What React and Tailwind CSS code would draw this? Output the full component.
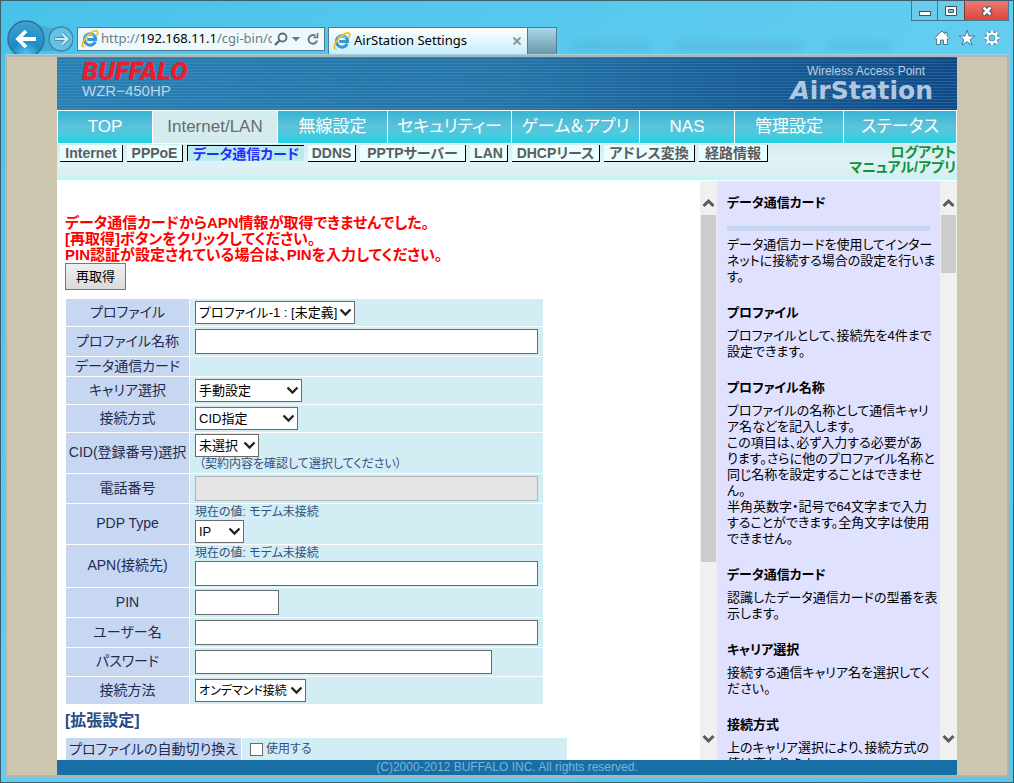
import React from "react";

const NAV = [
  "TOP",
  "Internet/LAN",
  "無線設定",
  "セキュリティー",
  "ゲーム＆アプリ",
  "NAS",
  "管理設定",
  "ステータス",
];

const SUBNAV = [
  { text: "Internet", width: "w-[63px]" },
  { text: "PPPoE", width: "w-[56px]" },
  { text: "データ通信カード", width: "w-[117px]", active: true },
  { text: "DDNS", width: "w-[48px]" },
  { text: "PPTPサーバー", width: "w-[106px]" },
  { text: "LAN", width: "w-[38px]" },
  { text: "DHCPリース", width: "w-[88px]" },
  { text: "アドレス変換", width: "w-[91px]" },
  { text: "経路情報", width: "w-[69px]" },
];

const HELP = [
  { title: "プロファイル", lines: ["プロファイルとして、接続先を4件まで", "設定できます。"] },
  {
    title: "プロファイル名称",
    lines: [
      "プロファイルの名称として通信キャリ",
      "ア名などを記入します。",
      "この項目は、必ず入力する必要があ",
      "ります。さらに他のプロファイル名称と",
      "同じ名称を設定することはできませ",
      "ん。",
      "半角英数字・記号で64文字まで入力",
      "することができます。全角文字は使用",
      "できません。",
    ],
  },
  { title: "データ通信カード", lines: ["認識したデータ通信カードの型番を表", "示します。"] },
  { title: "キャリア選択", lines: ["接続する通信キャリア名を選択してく", "ださい。"] },
  { title: "接続方式", lines: ["上のキャリア選択により、接続方式の", "値は変わります。"] },
];

function IeLogo() {
  return (
    <svg viewBox="0 0 18 18" className="h-[18px] w-[18px] shrink-0" aria-hidden="true">
      <path
        d="M14.2 11.6A5.6 5.6 0 1 1 14.6 9.4H6.2"
        fill="none"
        stroke="#3a95d6"
        strokeWidth="3"
      />
      <path d="M4.6 6.6A5.2 5.2 0 0 1 13 6" fill="none" stroke="#8accf0" strokeWidth="1.200" />
      <path
        d="M3.4 16.4C.2 17 .6 13 4 8.600C8 3.400 14.500-.6 16.300 1.500C17.200 2.600 16.500 4.400 15.600 5.800"
        fill="none"
        stroke="#f3bd22"
        strokeWidth="1.800"
      />
    </svg>
  );
}

function BackForward() {
  return (
    <svg viewBox="4 0 68 53" className="h-[53px] w-[68px] shrink-0" aria-hidden="true">
      <defs>
        <radialGradient id="back" cx="50%" cy="95%" r="90%">
          <stop offset="0" stopColor="#5cc4ec" />
          <stop offset=".45" stopColor="#1d8ac6" />
          <stop offset="1" stopColor="#3c9fd0" />
        </radialGradient>
      </defs>
      <path d="M34 22C44 27 50 28 60 26V50H38Z" fill="#3da5cb" opacity=".7" />
      <circle cx="25" cy="38" r="18" fill="url(#back)" stroke="#31708f" strokeWidth="1.500" />
      <circle cx="60" cy="38" r="12" fill="#64c3e4" stroke="#3b86a3" strokeWidth="1.500" />
      <path d="M35 38H17.500M25 30L17 38L25 46" fill="none" stroke="#fff" strokeWidth="3.800" />
      <path d="M53.500 38H66M61 32.500L66.500 38L61 43.500" fill="none" stroke="#4792b0" strokeWidth="4" />
      <path d="M54 38H66M61 32.500L66.500 38L61 43.500" fill="none" stroke="#c4ebf7" strokeWidth="2.200" />
    </svg>
  );
}

function HomeIcon() {
  return (
    <svg viewBox="0 0 18 18" className="h-[18px] w-[18px]" aria-hidden="true">
      <path
        d="M9 2L1.500 9.200L2.600 10.400L3.600 9.600V15.500H7.500V11H10.500V15.500H14.400V9.600L15.400 10.400L16.500 9.200L14 6.800V3.200H12V5Z"
        fill="#fff"
        stroke="#3a6f86"
        strokeWidth=".9"
      />
    </svg>
  );
}

function StarIcon() {
  return (
    <svg viewBox="0 0 18 18" className="h-[18px] w-[18px]" aria-hidden="true">
      <path
        d="M9 1.300L11 7H16.800L12.200 10.500L13.900 16L9 12.700L4.100 16L5.800 10.500L1.200 7H7Z"
        fill="#fff"
        stroke="#3a6f86"
        strokeWidth=".9"
      />
    </svg>
  );
}

function GearIcon() {
  const teeth = "M9 1.500V4M9 14V16.500M1.500 9H4M14 9H16.500M3.700 3.700L5.500 5.500M12.500 12.500L14.300 14.300M14.300 3.700L12.500 5.500M5.500 12.500L3.700 14.300";
  return (
    <svg viewBox="0 0 18 18" className="h-[18px] w-[18px]" fill="none" aria-hidden="true">
      <g stroke="#3a6f86">
        <path d={teeth} strokeWidth="4" />
        <circle cx="9" cy="9" r="4.500" strokeWidth="3.600" />
      </g>
      <g stroke="#fff">
        <path d={teeth} strokeWidth="2.600" />
        <circle cx="9" cy="9" r="4.500" strokeWidth="2.400" />
      </g>
    </svg>
  );
}

function BrowserChrome() {
  return (
    <header className="relative flex h-[53px] shrink-0 justify-between overflow-hidden font-['Noto_Sans','Noto_Sans_CJK_JP',sans-serif]">
      <div aria-hidden="true" className="absolute inset-y-0 right-0 left-1/2 flex items-end gap-6 opacity-25 blur-xs">
        <span className="mb-1 ml-16 h-2 w-20 bg-[#3b93b0]" />
        <span className="mb-1 h-2 w-32 bg-[#4b8ba5]" />
        <span className="mb-1 h-2 w-16 bg-[#3b93b0]" />
      </div>
      <div className="relative flex min-w-0 items-end">
        <BackForward />
        <div className="mb-[3px] ml-1 flex h-[24px] w-[248px] items-center border border-[#4c7d90] bg-[#edf9fd] px-[3px]">
          <IeLogo />
          <p className="mr-[2px] ml-[2px] w-[171px] overflow-hidden text-[13px] whitespace-nowrap text-[#6e7c83]">
            http://<span className="text-black">192.168.11.1</span>/cgi-bin/c
          </p>
          <button type="button" aria-label="検索">
            <svg viewBox="0 0 14 14" className="h-[14px] w-[14px]" fill="none" stroke="#5d6a70" strokeWidth="1.800">
              <circle cx="8.500" cy="5.500" r="4" />
              <path d="M5.500 8.500L1 13" strokeWidth="2.400" />
            </svg>
          </button>
          <button type="button" aria-label="履歴" className="ml-[4px]">
            <svg viewBox="0 0 8 5" className="h-[5px] w-[8px]" fill="#6d7a80">
              <path d="M0 0H8L4 4.500Z" />
            </svg>
          </button>
          <button type="button" aria-label="更新" className="ml-[6px]">
            <svg viewBox="0 0 14 14" className="h-[14px] w-[14px]" fill="none" stroke="#6d7a80" strokeWidth="2">
              <path d="M11 8.500A4.300 4.300 0 1 1 9.500 4" />
              <path d="M7.500 5.500H11.500V1" strokeWidth="1.600" />
            </svg>
          </button>
        </div>
        <div className="ml-[3px] flex h-[27px] w-[200px] items-center border border-b-0 border-[#4c7d90] bg-linear-to-b from-white to-[#c3eefb] px-1">
          <IeLogo />
          <span className="ml-[3px] flex-1 truncate text-[13px] text-black">AirStation Settings</span>
          <button type="button" aria-label="タブを閉じる">
            <svg viewBox="0 0 8 8" className="mr-[2px] h-[8px] w-[8px]" stroke="#8b979c" strokeWidth="2">
              <path d="M.5 .5L7.500 7.500M7.500 .5L.5 7.500" />
            </svg>
          </button>
        </div>
        <button
          type="button"
          aria-label="新しいタブ"
          className="h-[27px] w-[29px] border border-b-0 border-l-0 border-[#4c7d90] bg-linear-to-b from-[#a8d9e8] to-[#6b98a9]"
        />
      </div>
      <div className="relative flex shrink-0 flex-col items-end">
        <div className="flex h-[20px] border border-t-0 border-[#41788f]">
          <button type="button" aria-label="最小化" className="flex w-[26px] items-center justify-center border-r border-[#41788f] bg-[#6bcbeb]">
            <svg viewBox="0 0 12 12" className="h-[12px] w-[12px]">
              <rect x=".5" y="6.500" width="11" height="4" fill="#fff" stroke="#46525a" />
            </svg>
          </button>
          <button type="button" aria-label="最大化" className="flex w-[26px] items-center justify-center bg-[#6bcbeb]">
            <svg viewBox="0 0 12 10" className="h-[10px] w-[12px]">
              <path d="M.5 .5H11.500V9.500H.5Z" fill="#fff" stroke="#46525a" />
              <path d="M3.500 3.500H8.500V6.500H3.500Z" fill="#6bcbeb" stroke="#46525a" />
            </svg>
          </button>
          <button type="button" aria-label="閉じる" className="flex w-[44px] items-center justify-center border-l border-[#7a3a34] bg-linear-to-b from-[#ec7a70] to-[#db4537]">
            <svg viewBox="0 0 12 10" className="h-[10px] w-[12px]">
              <path d="M2 1L10 9M10 1L2 9" stroke="#46525a" strokeWidth="4.600" />
              <path d="M2.500 1.500L9.500 8.500M9.500 1.500L2.500 8.500" stroke="#fff" strokeWidth="2.600" />
            </svg>
          </button>
        </div>
        <div className="mt-[8px] mr-[8px] flex gap-[7px]">
          <button type="button" aria-label="ホーム"><HomeIcon /></button>
          <button type="button" aria-label="お気に入り"><StarIcon /></button>
          <button type="button" aria-label="ツール"><GearIcon /></button>
        </div>
      </div>
    </header>
  );
}

function Masthead() {
  return (
    <div className="shrink-0 bg-linear-to-r from-[#2b7fb3] via-[#2673a8] to-[#114785]">
      <div className="flex h-[53px] items-start justify-between bg-[repeating-linear-gradient(180deg,rgba(90,190,220,0.22)_0px,rgba(90,190,220,0.22)_1px,transparent_1px,transparent_3px)] pr-[24px] pl-[25px]">
        <div>
          <p className="mt-[2px] font-['Roboto',sans-serif] text-[26px] leading-[24px] font-black text-[#ee1c2c] italic">
            BUFFALO
          </p>
          <p className="text-[15px] leading-[16px] text-[#bcd5e6]">WZR−450HP</p>
        </div>
        <div className="flex flex-col items-end">
          <p className="mt-[7px] mr-[8px] text-[12px] leading-[14px] text-[#b9cde0]">Wireless Access Point</p>
          <p className="font-['DejaVu_Sans',sans-serif] text-[25px] leading-[25px] font-bold text-[#b0c8de]">
            <span className="italic">A</span>irStation
          </p>
        </div>
      </div>
    </div>
  );
}

function MainNav() {
  return (
    <nav
      aria-label="メイン"
      className="grid shrink-0 grid-cols-[94fr_124fr_109fr_123fr_127fr_94fr_108fr_112fr] gap-px bg-white p-px text-[17px]"
    >
      {NAV.map((name) => (
        <a
          key={name}
          href="#"
          className={
            name === "Internet/LAN"
              ? "flex h-[32px] items-center justify-center overflow-hidden bg-[#d4ecee] whitespace-nowrap text-[#6a6a6a]"
              : "flex h-[32px] items-center justify-center overflow-hidden bg-linear-to-b from-[#36b4d3] via-[#5cc3da] to-[#1ed2e4] whitespace-nowrap text-white"
          }
        >
          {name}
        </a>
      ))}
    </nav>
  );
}

function SubNav() {
  return (
    <div className="flex h-[36px] shrink-0 justify-between border-b-2 border-[#b4fcfc] bg-linear-to-b from-[#d4ecee] via-[#e1f2f6] to-[#d6eef0] pl-[3px]">
      <nav aria-label="サブ" className="flex gap-1 pt-px text-[14px] leading-[16px] font-bold">
        {SUBNAV.map((item) => (
          <a
            key={item.text}
            href="#"
            className={
              item.active
                ? `${item.width} h-[16px] overflow-hidden border-t border-l border-black bg-[#baecee] text-center whitespace-nowrap text-[#2a2aff]`
                : `${item.width} h-[17px] overflow-hidden border-r border-b border-black bg-[#eafefe] text-center whitespace-nowrap text-[#5c5c5c]`
            }
          >
            {item.text}
          </a>
        ))}
      </nav>
      <div className="flex flex-col items-end pt-px pr-px text-[14px] leading-[15px] font-bold text-[#0a9640]">
        <a href="#">ログアウト</a>
        <a href="#">マニュアル/アプリ</a>
      </div>
    </div>
  );
}

function Scrollbar({ thumb }) {
  return (
    <div aria-hidden="true" className="flex w-[17px] shrink-0 flex-col items-center bg-[#f0f0f0] pt-[17px] pb-[13px]">
      <svg viewBox="0 0 17 17" className="h-[17px] w-[17px]" fill="none" stroke="#5a5a5a" strokeWidth="3">
        <path d="M3.500 8L8.500 3L13.500 8" />
      </svg>
      <div className="w-full flex-1 px-px">
        <div className={`${thumb} bg-[#cccccc]`} />
      </div>
      <svg viewBox="0 0 17 17" className="h-[17px] w-[17px]" fill="none" stroke="#5a5a5a" strokeWidth="3">
        <path d="M3.500 6L8.500 11L13.500 6" />
      </svg>
    </div>
  );
}

function Select({ id, width, text, size = "text-[13px]" }) {
  return (
    <span className={`relative block h-[23px] ${width}`}>
      <select
        id={id}
        className={`block h-full w-full appearance-none border border-[#6a6a6a] bg-white pr-3 pl-[3px] leading-[20px] text-black ${size}`}
      >
        <option>{text}</option>
      </select>
      <svg
        viewBox="0 0 13 9"
        className="pointer-events-none absolute top-[7px] right-[3px] h-[9px] w-[13px]"
        fill="none"
        stroke="#222"
        strokeWidth="2.300"
        aria-hidden="true"
      >
        <path d="M1.500 1.500L6.500 6.500L11.500 1.500" />
      </svg>
    </span>
  );
}

function Field({ id, className, type = "text", disabled = false }) {
  return (
    <input
      id={id}
      type={type}
      disabled={disabled}
      className={`block border border-[#6a6a6a] bg-white px-1 text-[13px] text-black disabled:border-[#b4b4b4] disabled:bg-[#e4e4e4] ${className}`}
    />
  );
}

function Hint({ children }) {
  return <p className="text-[12px] leading-[15px] text-[#35507e]">{children}</p>;
}

function Row({ id, label, height, children }) {
  return (
    <tr className={height}>
      <th scope="row" className="w-[123px] bg-[#c8d7f1] p-0 pb-[2px] text-center align-middle text-[14px] leading-[16px] font-normal whitespace-nowrap text-[#1f2c52]">
        {id ? <label htmlFor={id}>{label}</label> : label}
      </th>
      <td className="bg-[#d3edf4] py-0 pr-[5px] pl-[5px] align-middle">{children}</td>
    </tr>
  );
}

function Settings() {
  return (
    <main className="min-w-0 flex-1 overflow-hidden bg-white pt-[34px] pl-2">
      <p className="text-[15px] leading-[16px] font-bold text-[#ff0000]">
        データ通信カードからAPN情報が取得できませんでした。
        <br />
        [再取得]ボタンをクリックしてください。
        <br />
        PIN認証が設定されている場合は、PINを入力してください。
      </p>
      <button
        type="button"
        className="flex h-[27px] w-[61px] items-center justify-center border border-[#777] bg-linear-to-b from-[#efefef] to-[#dadada] text-[13px] text-black"
      >
        再取得
      </button>
      <table className="mt-[8px] w-[479px] table-fixed border-separate border-spacing-px">
        <colgroup>
          <col className="w-[123px]" />
          <col />
        </colgroup>
        <tbody>
          <Row id="profile" label="プロファイル" height="h-[27px]">
            <Select id="profile" width="w-[160px]" text="プロファイル-1 : [未定義]" />
          </Row>
          <Row id="profile-name" label="プロファイル名称" height="h-[29px]">
            <Field id="profile-name" className="h-[25px] w-full" />
          </Row>
          <Row label="データ通信カード" height="h-[19px]" />
          <Row id="carrier" label="キャリア選択" height="h-[27px]">
            <Select id="carrier" width="w-[107px]" text="手動設定" />
          </Row>
          <Row id="method" label="接続方式" height="h-[27px]">
            <Select id="method" width="w-[103px]" text="CID指定" />
          </Row>
          <Row id="cid" label="CID(登録番号)選択" height="h-[40px]">
            <Select id="cid" width="w-[64px]" text="未選択" />
            <div className="pl-[4px]">
              <Hint>（契約内容を確認して選択してください）</Hint>
            </div>
          </Row>
          <Row id="phone" label="電話番号" height="h-[29px]">
            <Field id="phone" className="h-[25px] w-full" disabled />
          </Row>
          <Row id="pdp" label="PDP Type" height="h-[40px]">
            <Hint>現在の値: モデム未接続</Hint>
            <Select id="pdp" width="w-[49px]" text="IP" />
          </Row>
          <Row id="apn" label="APN(接続先)" height="h-[42px]">
            <Hint>現在の値: モデム未接続</Hint>
            <Field id="apn" className="h-[25px] w-full" />
          </Row>
          <Row id="pin" label="PIN" height="h-[29px]">
            <Field id="pin" className="h-[25px] w-[84px]" />
          </Row>
          <Row id="user" label="ユーザー名" height="h-[29px]">
            <Field id="user" className="h-[25px] w-full" />
          </Row>
          <Row id="password" label="パスワード" height="h-[28px]">
            <Field id="password" type="password" className="h-[24px] w-[297px]" />
          </Row>
          <Row id="connect" label="接続方法" height="h-[27px]">
            <Select id="connect" width="w-[111px]" text="オンデマンド接続" size="text-[12px]" />
          </Row>
        </tbody>
      </table>
      <h2 className="mt-[6px] text-[16px] leading-[20px] font-bold text-[#2a4a86]">[拡張設定]</h2>
      <table className="mt-[6px] w-[503px] table-fixed border-separate border-spacing-px">
        <tbody>
          <tr className="h-[27px]">
            <th scope="row" className="w-[175px] bg-[#c8d7f1] p-0 pb-[6px] text-center text-[14px] leading-[16px] font-normal whitespace-nowrap text-[#1f2c52]">
              プロファイルの自動切り換え
            </th>
            <td className="bg-[#d3edf4] p-0 pb-[4px] pl-2">
              <label className="flex items-center gap-[3px] text-[12px] leading-[15px] text-[#35507e]">
                <input type="checkbox" className="h-[13px] w-[13px] appearance-none border border-[#6a6a6a] bg-white" />
                使用する
              </label>
            </td>
          </tr>
        </tbody>
      </table>
    </main>
  );
}

function Help() {
  return (
    <aside className="w-[223px] shrink-0 overflow-hidden bg-[#e0e0ff] px-[10px] pt-[14px] text-[13px] leading-[16px] whitespace-nowrap text-black">
      <h2 className="font-bold">データ通信カード</h2>
      <hr className="mt-[15px] h-[5px] border-0 bg-[#c8d7f1]" />
      <p className="mt-[6px]">
        データ通信カードを使用してインター
        <br />
        ネットに接続する場合の設定を行いま
        <br />
        す。
      </p>
      {HELP.map((entry) => (
        <section key={entry.title} className="mt-5">
          <h3 className="font-bold">{entry.title}</h3>
          <p className="mt-[7px]">
            {entry.lines.map((line) => (
              <span key={line} className="block">
                {line}
              </span>
            ))}
          </p>
        </section>
      ))}
    </aside>
  );
}

export default function App() {
  return (
    <div className="flex h-screen flex-col overflow-hidden border border-[#3d5f6c] bg-linear-to-br from-[#48c2ea] via-[#62cdf0] to-[#58c6e6] px-1 pb-[5px] font-['Liberation_Sans','Noto_Sans_CJK_JP',sans-serif] [font-feature-settings:'palt']">
      <BrowserChrome />
      <div className="min-h-0 flex-1 border-t border-[#9bd3e6]">
        <div className="flex h-full border-2 border-[#b3b3b3] bg-[#cdc6af] px-[50px]">
          <div className="flex min-w-0 flex-1 flex-col">
            <Masthead />
            <MainNav />
            <SubNav />
            <div className="flex min-h-0 flex-1 border-t border-white">
              <Settings />
              <Scrollbar thumb="h-[347px]" />
              <Help />
              <Scrollbar thumb="h-[58px]" />
            </div>
            <footer className="h-[15px] shrink-0 bg-[#186fa6] text-center text-[12px] leading-[15px] text-[#79b5d6]">
              (C)2000-2012 BUFFALO INC. All rights reserved.
            </footer>
          </div>
        </div>
      </div>
    </div>
  );
}
